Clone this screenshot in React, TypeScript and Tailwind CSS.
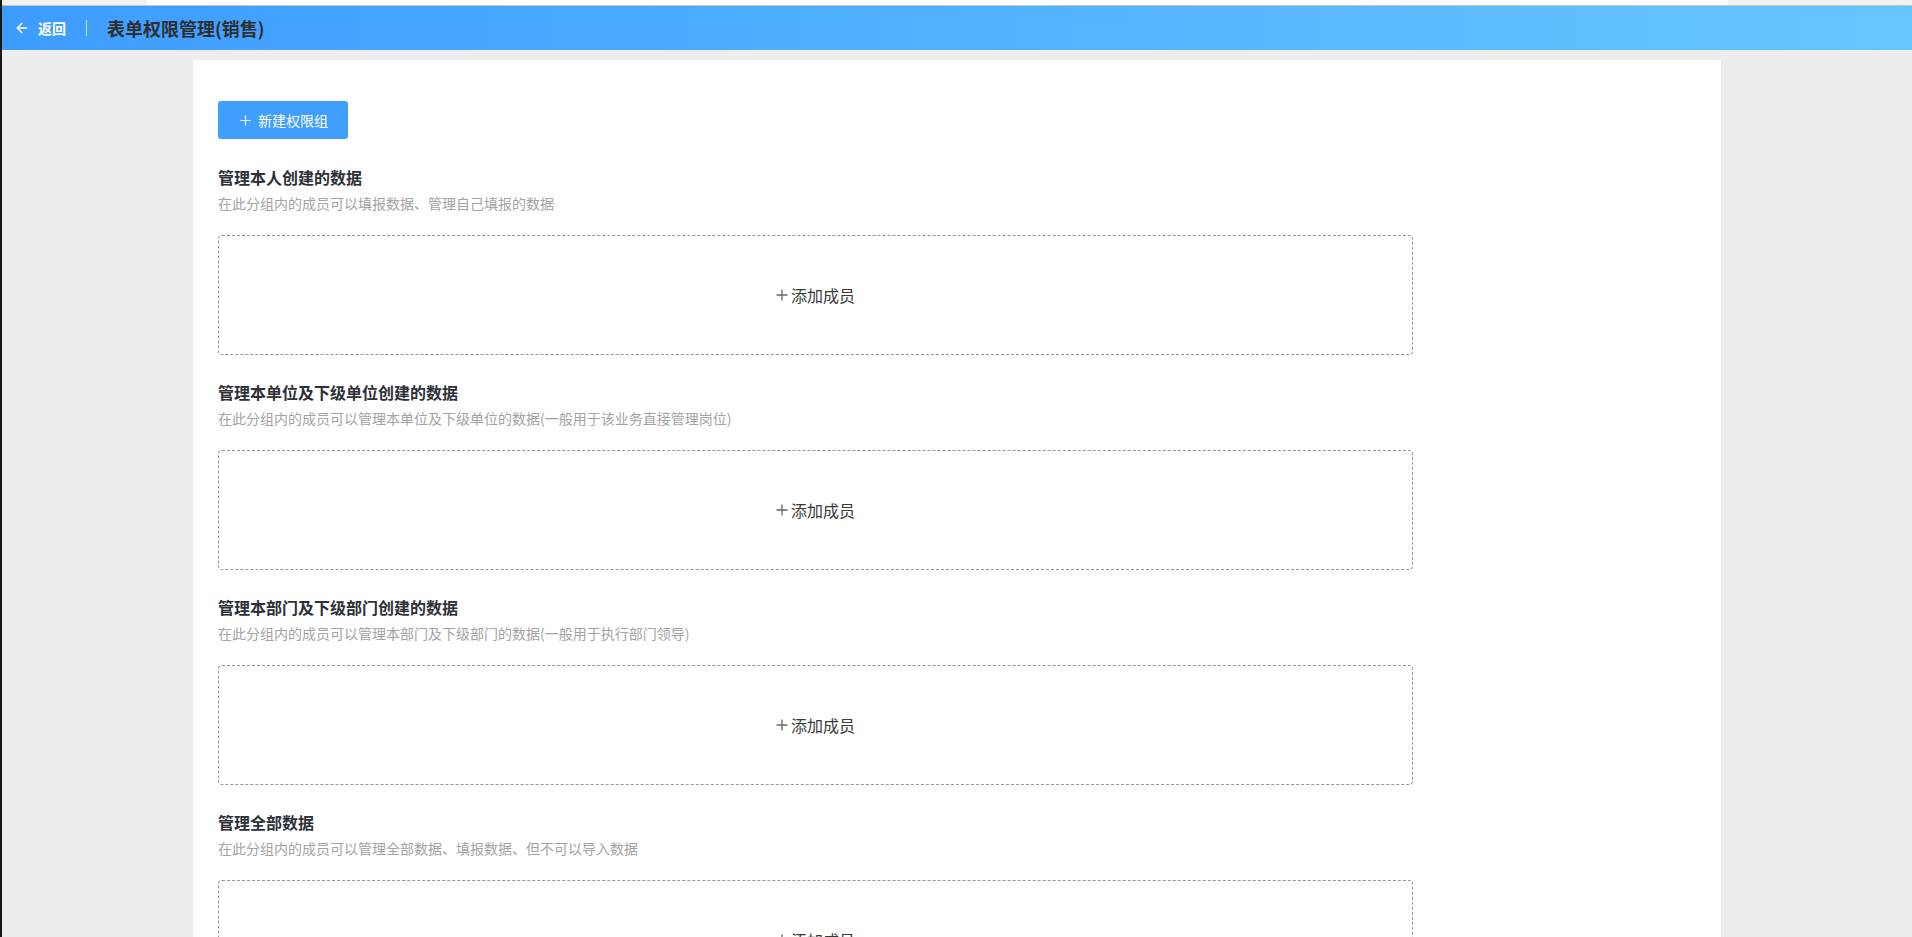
import { ArrowLeft } from "lucide-react"

type Group = {
  title: string
  desc: string
}

const groups: Group[] = [
  { title: "管理本人创建的数据", desc: "在此分组内的成员可以填报数据、管理自己填报的数据" },
  {
    title: "管理本单位及下级单位创建的数据",
    desc: "在此分组内的成员可以管理本单位及下级单位的数据(一般用于该业务直接管理岗位)",
  },
  {
    title: "管理本部门及下级部门创建的数据",
    desc: "在此分组内的成员可以管理本部门及下级部门的数据(一般用于执行部门领导)",
  },
  { title: "管理全部数据", desc: "在此分组内的成员可以管理全部数据、填报数据、但不可以导入数据" },
]

function PlusMark({ size, className }: { size: number; className?: string }) {
  return (
    <svg width={size} height={size} viewBox="0 0 12 12" className={className} aria-hidden="true">
      <path d="M6 0.5V11.5M0.5 6H11.5" stroke="currentColor" strokeWidth="1.3" fill="none" />
    </svg>
  )
}

function GroupSection({ group }: { group: Group }) {
  return (
    <section>
      <h3 className="text-[16px] leading-[24px] font-bold text-[#2d3038]">{group.title}</h3>
      <p className="mt-[4px] text-[14px] leading-[20px] text-[#a3a3a3]">{group.desc}</p>
      <button
        type="button"
        className="mt-[22px] flex h-[120px] w-[1195px] items-center justify-center gap-[3px] rounded-[4px] border border-dashed border-[#969696] bg-white"
      >
        <PlusMark size={12} className="text-[#666]" />
        <span className="text-[16px] leading-[22px] text-[#3a3a3a]">添加成员</span>
      </button>
    </section>
  )
}

export default function App() {
  return (
    <div className="flex min-h-screen bg-[#ededed] font-['Noto_Sans_CJK_SC','Liberation_Sans',sans-serif]">
      <div className="w-[2px] shrink-0 bg-[#161616]" />
      <div className="min-w-0 flex-1">
        <div className="h-[6px] border-b border-[#c4c4c4] bg-[#f2f2f2]">
          <div className="ml-[145px] h-[5px] w-[1581px] bg-white" />
        </div>

        <header className="flex h-[44px] items-center bg-gradient-to-r from-[#3d9cff] to-[#67c6ff] pl-[12px]">
          <button type="button" className="flex items-center gap-[8px] text-white">
            <ArrowLeft size={16} strokeWidth={2.2} />
            <span className="text-[14px] leading-[20px] font-semibold">返回</span>
          </button>
          <span className="mx-[20px] h-[16px] w-px bg-white/70" />
          <h1 className="text-[18px] leading-[24px] font-bold text-[#2e2e2e]">表单权限管理(销售)</h1>
        </header>

        <main className="pt-[10px]">
          <div className="mx-auto w-[80%] bg-white px-[25px] pt-[41px] pb-[40px]">
            <button
              type="button"
              className="flex h-[38px] items-center gap-[7px] rounded-[3px] bg-[#409eff] pr-[20px] pl-[22px] text-[14px] text-white"
            >
              <PlusMark size={11} />
              新建权限组
            </button>

            <div className="mt-[26px] flex flex-col gap-[25px]">
              {groups.map((g) => (
                <GroupSection key={g.title} group={g} />
              ))}
            </div>
          </div>
        </main>
      </div>
    </div>
  )
}
